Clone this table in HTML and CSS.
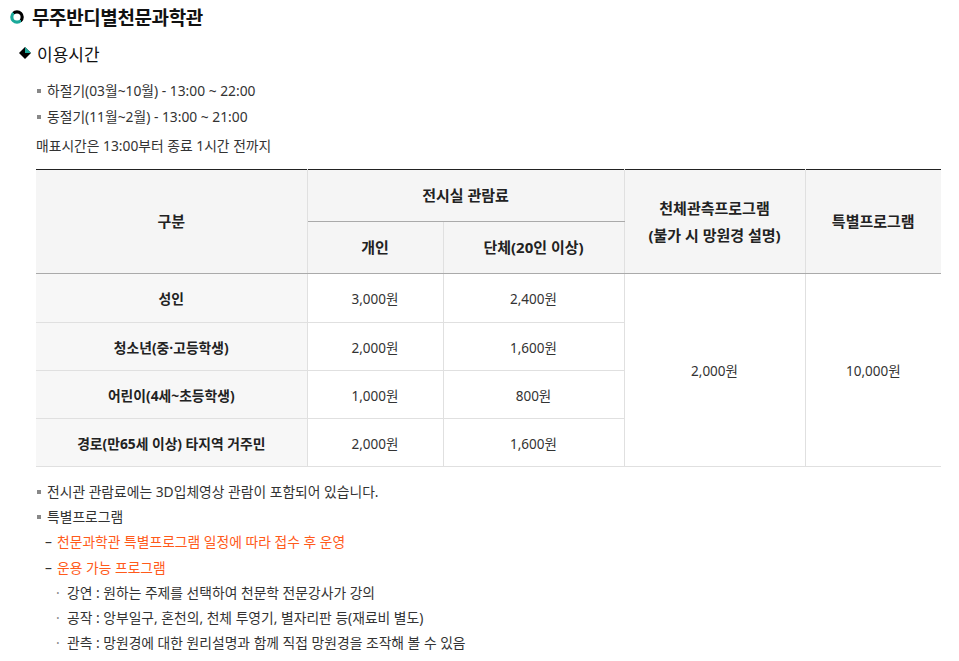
FILE: index.html
```html
<!DOCTYPE html>
<html lang="ko">
<head>
<meta charset="utf-8">
<title>무주반디별천문과학관</title>
<link rel="stylesheet" href="styles.css">
</head>
<body>
<div class="page">
  <h2 class="title">
    <svg class="ring" width="14" height="14" viewBox="0 0 14 14">
      <defs>
        <linearGradient id="rg" x1="0" y1="1" x2="1" y2="0">
          <stop offset="0.5" stop-color="#1aa99a"/>
          <stop offset="0.5" stop-color="#000"/>
        </linearGradient>
      </defs>
      <circle cx="7" cy="7" r="5.2" fill="none" stroke="url(#rg)" stroke-width="3.2"/>
    </svg>
    무주반디별천문과학관
  </h2>
  <h3 class="sub">
    <svg class="diamond" width="12" height="12" viewBox="0 0 12 12">
      <polygon points="6,0 12,6 6,12 0,6" fill="#000"/>
      <polygon points="6,0 12,6 6,6" fill="#1aa99a"/>
    </svg>
    이용시간
  </h3>
  <ul class="sq-list">
    <li>하절기(03월~10월) - 13:00 ~ 22:00</li>
    <li>동절기(11월~2월) - 13:00 ~ 21:00</li>
  </ul>
  <p class="note">매표시간은 13:00부터 종료 1시간 전까지</p>

  <table class="fee">
    <colgroup>
      <col class="c1"><col class="c2"><col class="c3"><col class="c4"><col class="c5">
    </colgroup>
    <thead>
      <tr>
        <th rowspan="2">구분</th>
        <th colspan="2" class="grp">전시실 관람료</th>
        <th rowspan="2">천체관측프로그램<br>(불가 시 망원경 설명)</th>
        <th rowspan="2">특별프로그램</th>
      </tr>
      <tr>
        <th>개인</th>
        <th>단체(20인 이상)</th>
      </tr>
    </thead>
    <tbody>
      <tr class="first">
        <th>성인</th>
        <td>3,000원</td>
        <td>2,400원</td>
        <td rowspan="4">2,000원</td>
        <td rowspan="4">10,000원</td>
      </tr>
      <tr>
        <th>청소년(중·고등학생)</th>
        <td>2,000원</td>
        <td>1,600원</td>
      </tr>
      <tr>
        <th>어린이(4세~초등학생)</th>
        <td>1,000원</td>
        <td>800원</td>
      </tr>
      <tr>
        <th>경로(만65세 이상) 타지역 거주민</th>
        <td>2,000원</td>
        <td>1,600원</td>
      </tr>
    </tbody>
  </table>

  <ul class="sq-list after">
    <li>전시관 관람료에는 3D입체영상 관람이 포함되어 있습니다.</li>
    <li>특별프로그램
      <ul class="dash-list">
        <li><span class="orange">천문과학관 특별프로그램 일정에 따라 접수 후 운영</span></li>
        <li><span class="orange">운용 가능 프로그램</span>
          <ul class="dot-list">
            <li>강연 : 원하는 주제를 선택하여 천문학 전문강사가 강의</li>
            <li>공작 : 앙부일구, 혼천의, 천체 투영기, 별자리판 등(재료비 별도)</li>
            <li>관측 : 망원경에 대한 원리설명과 함께 직접 망원경을 조작해 볼 수 있음</li>
          </ul>
        </li>
      </ul>
    </li>
  </ul>
</div>
</body>
</html>
```

FILE: styles.css
```css
* { box-sizing: border-box; }
html, body { margin: 0; padding: 0; background: #fff; }
body {
  font-family: "Noto Sans", "Noto Sans CJK KR", sans-serif;
  color: #333;
  font-size: 13.8px;
}
.page { padding: 0 18px 0 10px; }

.title {
  display: flex;
  align-items: center;
  gap: 8px;
  margin: 0;
  height: 34px;
  font-size: 19px;
  font-weight: 700;
  color: #111;
  letter-spacing: -0.4px;
}
.ring { flex: none; }

.sub {
  display: flex;
  align-items: center;
  gap: 6px;
  margin: 6px 0 0 9px;
  height: 26px;
  font-size: 17px;
  font-weight: 400;
  color: #111;
}
.diamond { flex: none; }

.sq-list {
  list-style: none;
  margin: 12px 0 0 27px;
  padding: 0;
}
.sq-list > li {
  position: relative;
  padding-left: 10px;
  line-height: 26px;
}
.sq-list > li::before {
  content: "";
  position: absolute;
  left: 0;
  top: 11px;
  width: 4px;
  height: 4px;
  background: #888;
}
.note {
  margin: 3px 0 0 26px;
  line-height: 26px;
}

.fee {
  margin: 10px 0 0 26px;
  width: 905px;
  border-collapse: collapse;
  table-layout: fixed;
  border-top: 1px solid #222;
}
.c1 { width: 271px; }
.c2 { width: 136px; }
.c3 { width: 181px; }
.c4 { width: 181px; }
.c5 { width: 136px; }

.fee th, .fee td {
  border: 1px solid #e0e0e0;
  text-align: center;
  vertical-align: middle;
  padding: 0;
}
.fee tr > :first-child { border-left: none; }
.fee tr > :last-child { border-right: none; }
.fee tbody tr > td[rowspan] { border-right: 1px solid #e0e0e0; }
.fee tbody tr > td[rowspan]:last-child { border-right: none; }

.fee thead th {
  background: #f5f5f5;
  font-size: 15px;
  font-weight: 700;
  color: #222;
  height: 52px;
  line-height: 27px;
  border-top: none;
}
.fee thead th.grp { border-bottom: 1px solid #aaa; }
.fee thead tr:last-child th,
.fee thead th[rowspan] { border-bottom: 1px solid #aaa; }

.fee tbody th {
  background: #f7f7f7;
  font-weight: 700;
  color: #222;
  font-size: 13.8px;
  height: 48px;
}
.fee tbody td {
  font-size: 13.5px;
  color: #333;
  height: 48px;
}
.fee tbody tr.first > * { height: 49px; }

.sq-list.after { margin-top: 12px; margin-left: 27px; }
.sq-list.after li { line-height: 25.2px; }

.dash-list {
  list-style: none;
  margin: 0 0 0 -2px;
  padding: 0;
}
.dash-list > li {
  position: relative;
  padding-left: 12px;
}
.dash-list > li::before {
  content: "–";
  position: absolute;
  left: 0;
  top: 0;
  color: #333;
}
.orange { color: #ff5a1a; }

.dot-list {
  list-style: none;
  margin: 0;
  padding: 0;
}
.dot-list > li {
  position: relative;
  padding-left: 10px;
}
.dot-list > li::before {
  content: "·";
  position: absolute;
  left: -1px;
  top: 0;
  color: #888;
}
```
